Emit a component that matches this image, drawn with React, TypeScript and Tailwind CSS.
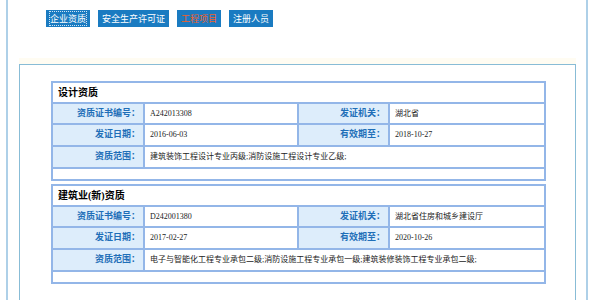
const tabs = [
  { name: "企业资质", active: false, focus: true },
  { name: "安全生产许可证", active: false, focus: false },
  { name: "工程项目", active: true, focus: false },
  { name: "注册人员", active: false, focus: false },
];

type Cert = {
  title: string;
  no: string;
  org: string;
  date: string;
  until: string;
  scope: string;
};

const certs: Cert[] = [
  {
    title: "设计资质",
    no: "A242013308",
    org: "湖北省",
    date: "2016-06-03",
    until: "2018-10-27",
    scope: "建筑装饰工程设计专业丙级;消防设施工程设计专业乙级;",
  },
  {
    title: "建筑业(新)资质",
    no: "D242001380",
    org: "湖北省住房和城乡建设厅",
    date: "2017-02-27",
    until: "2020-10-26",
    scope: "电子与智能化工程专业承包二级;消防设施工程专业承包一级;建筑装修装饰工程专业承包二级;",
  },
];

const label =
  "border-2 border-[#93b6e8] bg-[#ddedfb] pr-[3px] text-right font-bold text-[9px] text-[#1f6fb8] whitespace-nowrap";
const value = "border-2 border-[#93b6e8] pl-[5px] text-[8px] text-[#222] whitespace-nowrap";

function CertTable({ c }: { c: Cert }) {
  return (
    <table className="w-[493px] table-fixed border-collapse border-2 border-[#93b6e8] bg-white">
      <colgroup>
        <col className="w-[92px]" />
        <col className="w-[154px]" />
        <col className="w-[91px]" />
        <col className="w-[156px]" />
      </colgroup>
      <tbody>
        <tr className="h-[21px]">
          <td colSpan={4} className="border-2 border-[#93b6e8] pl-[5px] text-[10px] font-bold text-black">
            {c.title}
          </td>
        </tr>
        <tr className="h-[21px]">
          <td className={label}>资质证书编号：</td>
          <td className={value}>{c.no}</td>
          <td className={label}>发证机关：</td>
          <td className={value}>{c.org}</td>
        </tr>
        <tr className="h-[22px]">
          <td className={label}>发证日期：</td>
          <td className={value}>{c.date}</td>
          <td className={label}>有效期至：</td>
          <td className={value}>{c.until}</td>
        </tr>
        <tr className="h-[22px]">
          <td className={label}>资质范围：</td>
          <td colSpan={3} className={value}>
            {c.scope}
          </td>
        </tr>
        <tr className="h-[12px]">
          <td colSpan={4} className="border-2 border-[#93b6e8]"></td>
        </tr>
      </tbody>
    </table>
  );
}

export default function App() {
  return (
    <main
      className="h-[300px] w-[600px] overflow-hidden bg-white"
      style={{ fontFamily: '"Liberation Serif", "Noto Sans CJK SC", serif' }}
    >
      <div className="ml-[6px] h-full w-[582px] border-x-2 border-[#aed0e8]">
        <div className="flex gap-[8px] pl-[38px] pt-[10px]">
          {tabs.map((t) => (
            <div
              key={t.name}
              className={
                "flex h-[17px] items-center bg-[#1a7bc1] px-[4px] text-[9px] " +
                (t.active ? "text-[#f0602a]" : "text-white")
              }
              style={{ fontFamily: '"Noto Sans CJK SC", sans-serif' }}
            >
              <span className={t.focus ? "outline-1 outline-dotted outline-[#cfe4f4]" : ""}>{t.name}</span>
            </div>
          ))}
        </div>
        <div className="ml-[11px] mt-[31px] h-[6px] w-[557px] bg-[#fffcf2]" />
        <div className="ml-[11px] h-[300px] w-[557px] border border-[#88bcd6] pl-[31px] pt-[16px]">
          <div className="flex flex-col gap-[3px]">
            {certs.map((c) => (
              <CertTable key={c.title} c={c} />
            ))}
          </div>
        </div>
      </div>
    </main>
  );
}
